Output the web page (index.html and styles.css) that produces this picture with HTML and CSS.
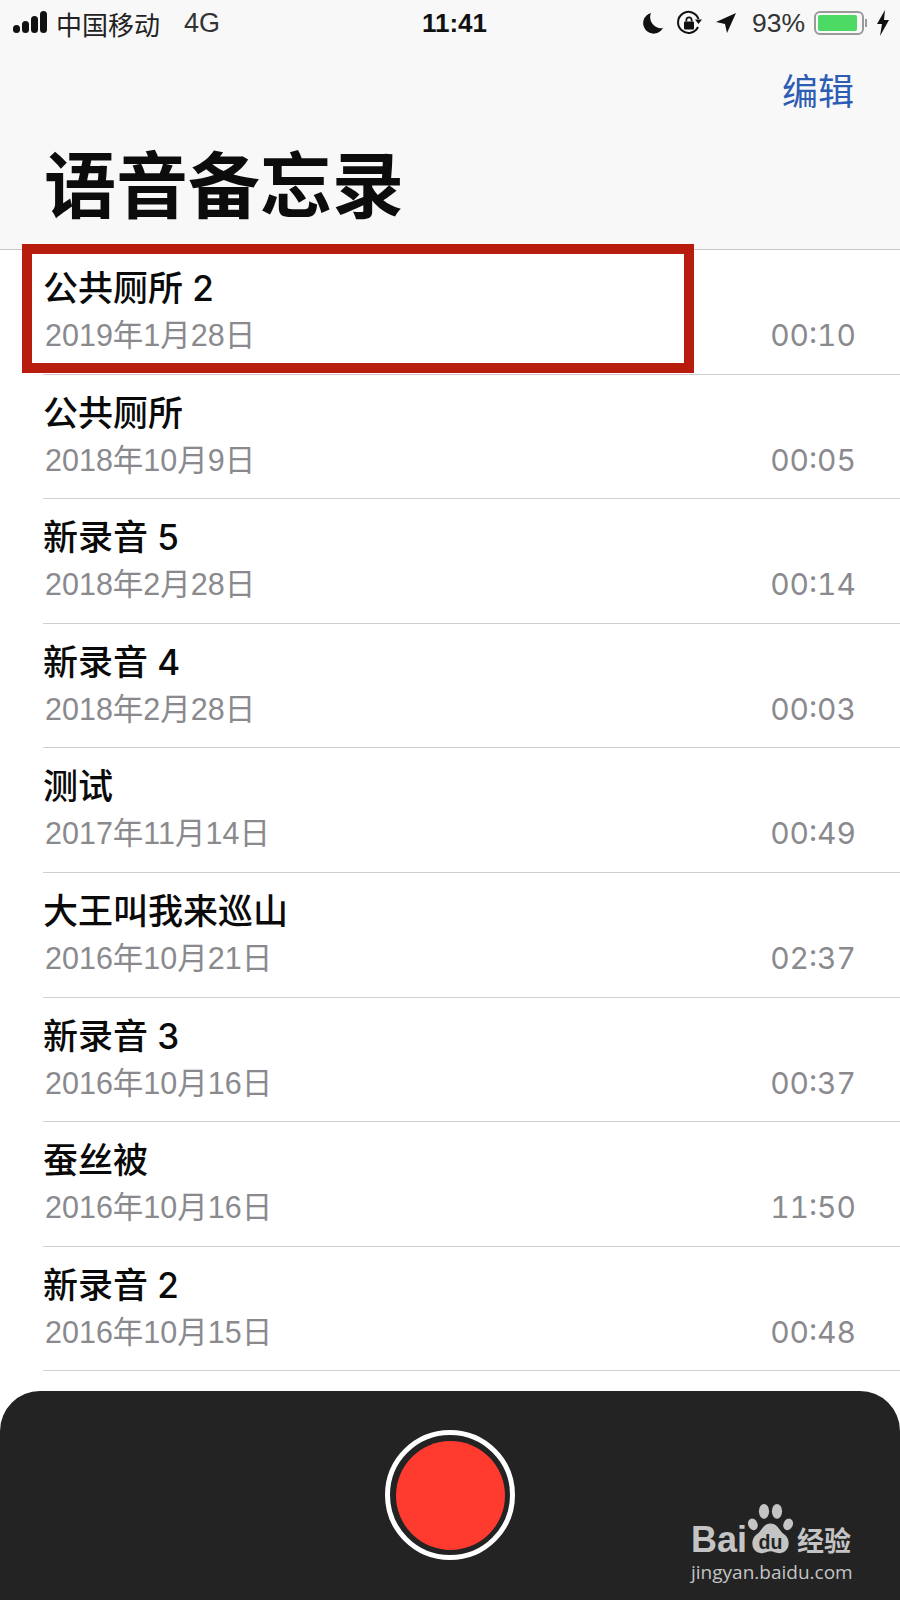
FILE: index.html
```html
<!DOCTYPE html>
<html>
    <head lang="zh">
        <meta charset="UTF-8">
        <title>语音备忘录</title>
        <link rel="stylesheet" href="styles.css">
    </head>
    <body>
        <div id="phone">
            <div id="header">
                <div id="status">
                    <div class="status-left">
                        <svg class="signal" width="36" height="24" viewBox="0 0 36 24">
                            <rect x="0" y="14" width="7" height="8" rx="3.5"/>
                            <rect x="9" y="10" width="7" height="12" rx="3.5"/>
                            <rect x="18" y="5" width="7" height="17" rx="3.5"/>
                            <rect x="27" y="0" width="7" height="22" rx="3.5"/>
                        </svg>
                        <span class="carrier">中国移动</span>
                        <span class="net">4G</span>
                    </div>
                    <div class="clock">11:41</div>
                    <div class="status-right">
                        <svg class="moon" width="21" height="24" viewBox="0 0 21 24">
                            <path d="M8 2 A10.5 10.5 0 1 0 20 17 A11 11 0 0 1 8 2 Z"/>
                        </svg>
                        <svg class="lock" width="26" height="26" viewBox="0 0 26 26">
                            <path d="M22 17 A10.5 10.5 0 1 1 22.5 9" fill="none" stroke="#111" stroke-width="2"/>
                            <path d="M19 9.500 L26 9.500 L22.500 14 Z"/>
                            <path d="M9.500 11.500 V10 a3.500 3.500 0 0 1 7 0 V11.500 H14.800 V10 a1.800 1.800 0 0 0 -3.600 0 V11.500 Z"/>
                            <rect x="8" y="11.500" width="10" height="8" rx="1"/>
                        </svg>
                        <svg class="arrow" width="22" height="22" viewBox="0 0 22 22">
                            <path d="M21 1 L12 21 L10 12 L1 10 Z"/>
                        </svg>
                        <span class="percent">93%</span>
                        <div class="battery"><div class="battery-fill"></div></div>
                        <div class="battery-nub"></div>
                        <svg class="bolt" width="14" height="26" viewBox="0 0 14 26">
                            <path d="M9 0 L1 14 H6 L4 26 L13 10 H8 Z"/>
                        </svg>
                    </div>
                </div>
                <div id="nav"><span class="edit">编辑</span></div>
                <h1 class="title">语音备忘录</h1>
            </div>
            <ul id="list">
                <li><div class="name">公共厕所 2</div><div class="meta"><span>2019年1月28日</span><span class="len">00:10</span></div></li>
                <li><div class="name">公共厕所</div><div class="meta"><span>2018年10月9日</span><span class="len">00:05</span></div></li>
                <li><div class="name">新录音 5</div><div class="meta"><span>2018年2月28日</span><span class="len">00:14</span></div></li>
                <li><div class="name">新录音 4</div><div class="meta"><span>2018年2月28日</span><span class="len">00:03</span></div></li>
                <li><div class="name">测试</div><div class="meta"><span>2017年11月14日</span><span class="len">00:49</span></div></li>
                <li><div class="name">大王叫我来巡山</div><div class="meta"><span>2016年10月21日</span><span class="len">02:37</span></div></li>
                <li><div class="name">新录音 3</div><div class="meta"><span>2016年10月16日</span><span class="len">00:37</span></div></li>
                <li><div class="name">蚕丝被</div><div class="meta"><span>2016年10月16日</span><span class="len">11:50</span></div></li>
                <li><div class="name">新录音 2</div><div class="meta"><span>2016年10月15日</span><span class="len">00:48</span></div></li>
            </ul>
            <div id="highlight"></div>
            <div id="panel">
                <div class="record"><div class="record-dot"></div></div>
                <div id="mark">
                    <div class="mark-top">
                        <span class="mark-bai">Bai</span>
                        <svg class="paw" width="47" height="52" viewBox="0 0 50 56">
                            <ellipse cx="6" cy="23" rx="5" ry="6.500" transform="rotate(-25 6 23)"/>
                            <ellipse cx="18" cy="9" rx="5.500" ry="8"/>
                            <ellipse cx="32" cy="9" rx="5.500" ry="8"/>
                            <ellipse cx="44" cy="23" rx="5" ry="6.500" transform="rotate(25 44 23)"/>
                            <path d="M25 22 C33 22 34 30 40 34 C48 40 45 54 35 54 C30 54 28 52 25 52 C22 52 20 54 15 54 C5 54 2 40 10 34 C16 30 17 22 25 22 Z"/>
                            <text x="25" y="49" class="paw-du">du</text>
                        </svg>
                        <span class="mark-jy">经验</span>
                    </div>
                    <div class="mark-url">jingyan.baidu.com</div>
                </div>
            </div>
        </div>
    </body>
</html>
```

FILE: styles.css
```css
*{
    margin:0;
    padding:0;
    box-sizing:border-box;
}
ul,ol{
    list-style:none;
}
body{
    background-color:#ffffff;
    font-family:"Liberation Sans","Noto Sans CJK SC",sans-serif;
}
#phone{
    width:900px;
    height:1600px;
    position:relative;
    overflow:hidden;
    display:flex;
    flex-direction:column;
    background-color:#ffffff;
}

/* header */
#header{
    height:250px;
    background-color:#f8f8f8;
    border-bottom:1px solid #c8c8c8;
    flex-shrink:0;
}
#status{
    height:46px;
    padding:0 10px 0 13px;
    display:flex;
    align-items:center;
    justify-content:space-between;
    color:#222222;
    font-size:26px;
}
.status-left{
    display:flex;
    align-items:center;
    width:300px;
}
.signal{
    fill:#111111;
    margin-right:7px;
}
.carrier{
    margin-right:24px;
}
.net{
    color:#333333;
    font-size:27px;
}
.clock{
    font-weight:bold;
    font-size:26px;
    color:#111111;
    margin-left:6px;
}
.status-right{
    display:flex;
    align-items:center;
    width:300px;
    justify-content:flex-end;
}
.status-right svg{
    fill:#111111;
}
.moon{
    margin-right:12px;
}
.lock{
    margin-right:13px;
}
.arrow{
    margin-right:15px;
}
.percent{
    color:#333333;
    font-size:26.5px;
    margin-right:9px;
}
.battery{
    width:50px;
    height:24px;
    border:2px solid #9a9a9a;
    border-radius:6px;
    padding:2px;
}
.battery-fill{
    height:100%;
    width:92%;
    background-color:#4cd964;
    border-radius:2px;
}
.battery-nub{
    width:2px;
    height:8px;
    background-color:#9a9a9a;
    margin:0 9px 0 1px;
}
#nav{
    height:60px;
    padding-right:46px;
    display:flex;
    align-items:center;
    justify-content:flex-end;
    margin-top:13px;
}
.edit{
    color:#2c5cb3;
    font-size:36px;
}
.title{
    margin-top:12px;
    padding-left:44px;
    font-size:72px;
    line-height:100px;
    font-weight:bold;
    color:#0c0c0c;
    font-family:"Noto Sans CJK SC",sans-serif;
}

/* list */
#list{
    padding-left:43px;
}
#list li{
    height:124.6px;
    padding-top:14px;
    padding-right:44px;
    border-bottom:1px solid #cfcfcf;
}
.name{
    font-size:35px;
    line-height:48px;
    font-weight:500;
    color:#0a0a0a;
    font-family:"Inter","Noto Sans CJK SC",sans-serif;
}
.meta{
    margin-top:1px;
    padding-left:2px;
    display:flex;
    justify-content:space-between;
    align-items:baseline;
    font-size:30.5px;
    line-height:44px;
    color:#8a8a8e;
}
.len{
    font-family:"Inter",sans-serif;
    font-size:30px;
    font-variant-numeric:tabular-nums;
}

/* red frame drawn over the first row */
#highlight{
    position:absolute;
    left:22px;
    top:244px;
    width:672px;
    height:129px;
    border:10px solid #b81c0c;
}

/* record panel */
#panel{
    position:absolute;
    left:0;
    right:0;
    bottom:0;
    height:209px;
    background-color:#232323;
    border-radius:40px 40px 0 0;
    display:flex;
    justify-content:center;
    padding-top:39px;
}
.record{
    width:130px;
    height:130px;
    border:5px solid #ffffff;
    border-radius:50%;
    padding:5.5px;
}
.record-dot{
    width:100%;
    height:100%;
    border-radius:50%;
    background-color:#ff3b30;
}
#mark{
    position:absolute;
    left:691px;
    top:116px;
    width:170px;
    color:#c4c4c4;
}
.mark-top{
    height:52px;
    display:flex;
    align-items:flex-end;
    position:absolute;
    left:0;
    top:-4px;
}
.mark-bai{
    font-size:36px;
    line-height:40px;
    font-weight:bold;
    margin-bottom:-5px;
}
.paw{
    fill:#c4c4c4;
    margin-right:3px;
}
.paw-du{
    font-size:21px;
    font-weight:bold;
    fill:#232323;
    text-anchor:middle;
}
.mark-jy{
    font-size:27px;
    line-height:34px;
    font-weight:bold;
    margin-bottom:-4px;
    white-space:nowrap;
}
.mark-url{
    position:absolute;
    left:0;
    top:53px;
    font-size:19px;
    line-height:24px;
    white-space:nowrap;
    font-family:"Open Sans",sans-serif;
}
```
